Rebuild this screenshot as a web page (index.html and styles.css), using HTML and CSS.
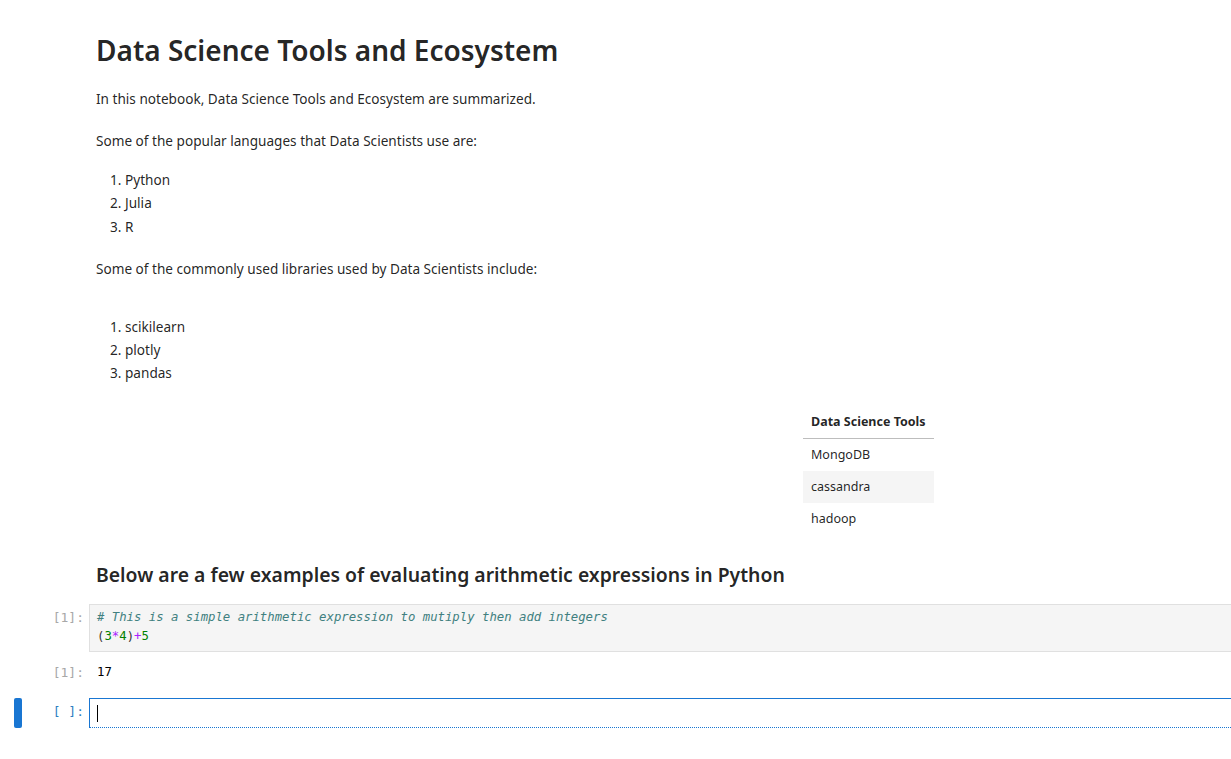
FILE: index.html
```html
<!DOCTYPE html>
<html>
<head>
<meta charset="utf-8">
<link rel="stylesheet" href="styles.css">
</head>
<body>
<div class="notebook">
  <div class="md">
    <h1 class="title">Data Science Tools and Ecosystem</h1>
    <p class="para p1">In this notebook, Data Science Tools and Ecosystem are summarized.</p>
    <p class="para p2">Some of the popular languages that Data Scientists use are:</p>
    <ol class="list l1">
      <li>Python</li>
      <li>Julia</li>
      <li>R</li>
    </ol>
    <p class="para p3">Some of the commonly used libraries used by Data Scientists include:</p>
    <ol class="list l2">
      <li>scikilearn</li>
      <li>plotly</li>
      <li>pandas</li>
    </ol>
    <div class="table-wrap">
      <table class="tools">
        <thead><tr><th>Data Science Tools</th></tr></thead>
        <tbody>
          <tr><td>MongoDB</td></tr>
          <tr class="odd"><td>cassandra</td></tr>
          <tr><td>hadoop</td></tr>
        </tbody>
      </table>
    </div>
    <h3 class="subtitle">Below are a few examples of evaluating arithmetic expressions in Python</h3>
  </div>

  <div class="cell code-cell">
    <div class="prompt">[1]:</div>
    <div class="editor"><span class="cm-comment"># This is a simple arithmetic expression to mutiply then add integers</span>
<span class="cm-paren">(</span><span class="cm-num">3</span><span class="cm-op">*</span><span class="cm-num">4</span><span class="cm-paren">)</span><span class="cm-op">+</span><span class="cm-num">5</span></div>
  </div>

  <div class="cell out-cell">
    <div class="prompt">[1]:</div>
    <div class="output">17</div>
  </div>

  <div class="cell active-cell">
    <div class="active-bar"></div>
    <div class="prompt active-prompt">[ ]:</div>
    <div class="editor empty"><span class="cursor"></span></div>
  </div>
</div>
</body>
</html>
```

FILE: styles.css
```css
html, body {
  margin: 0;
  padding: 0;
  background: #ffffff;
  overflow: hidden;
}
body {
  font-family: "Noto Sans", "Open Sans", sans-serif;
  color: rgba(0, 0, 0, 0.87);
  width: 1231px;
}
.notebook {
  padding-top: 32px;
}
.md {
  padding-left: 96px;
}
.title {
  margin: 0;
  font-size: 28px;
  line-height: 36px;
  font-weight: 600;
}
.para {
  margin: 0;
  font-size: 13.6px;
  line-height: 23px;
}
.p1 { margin-top: 19px; }
.p2 { margin-top: 19px; }
.p3 { margin-top: 19px; }
.list {
  margin: 0;
  padding-left: 29px;
  font-size: 13.6px;
  line-height: 23.3px;
}
.l1 { margin-top: 16px; }
.l2 { margin-top: 35px; }
.table-wrap {
  display: flex;
  padding-left: 707px;
  margin-top: 21px;
}
.tools {
  border-collapse: collapse;
  font-size: 12.5px;
  width: 131px;
}
.tools th, .tools td {
  text-align: left;
  padding: 7px 8px;
  line-height: 18px;
}
.tools th {
  font-weight: 700;
  border-bottom: 1px solid #bdbdbd;
}
.tools tr.odd td {
  background: #f5f5f5;
}
.subtitle {
  margin: 27.5px 0 0 0;
  font-size: 19.4px;
  line-height: 26px;
  font-weight: 600;
}
.cell {
  display: flex;
  align-items: flex-start;
  position: relative;
}
.prompt {
  flex: none;
  text-align: right;
  padding-right: 5px;
  font-family: "DejaVu Sans Mono", monospace;
  font-size: 13px;
  color: #a8a8a8;
  box-sizing: border-box;
  width: 89px;
}
.code-cell {
  margin-top: 16px;
}
.code-cell .prompt {
  padding-top: 4px;
  line-height: 19px;
}
.editor {
  flex: 1;
  background: #f5f5f5;
  border: 1px solid #e0e0e0;
  border-right: none;
  padding: 3px 7px 5px 7px;
  font-family: "DejaVu Sans Mono", monospace;
  font-size: 12.3px;
  line-height: 19px;
  white-space: pre;
  color: #000;
}
.cm-comment {
  color: #408080;
  font-style: italic;
}
.cm-num { color: #008000; }
.cm-op { color: #aa22ff; }
.cm-paren { color: #333; }
.out-cell {
  margin-top: 10px;
}
.out-cell .prompt, .output {
  line-height: 21px;
}
.output {
  padding-left: 8px;
  font-family: "DejaVu Sans Mono", monospace;
  font-size: 12.3px;
  color: #000;
}
.active-cell {
  margin-top: 15px;
}
.active-bar {
  position: absolute;
  left: 14px;
  top: 0;
  width: 8px;
  height: 30px;
  border-radius: 2px;
  background: #1976d2;
}
.active-prompt {
  color: #307fc1;
  line-height: 28px;
}
.editor.empty {
  background: #ffffff;
  border: 1px solid #1976d2;
  border-bottom: 1px dotted #1976d2;
  border-right: none;
  padding: 0 7px;
  box-sizing: border-box;
  height: 30px;
  display: flex;
  align-items: center;
}
.cursor {
  display: block;
  width: 1px;
  height: 17px;
  background: #000;
}
```
